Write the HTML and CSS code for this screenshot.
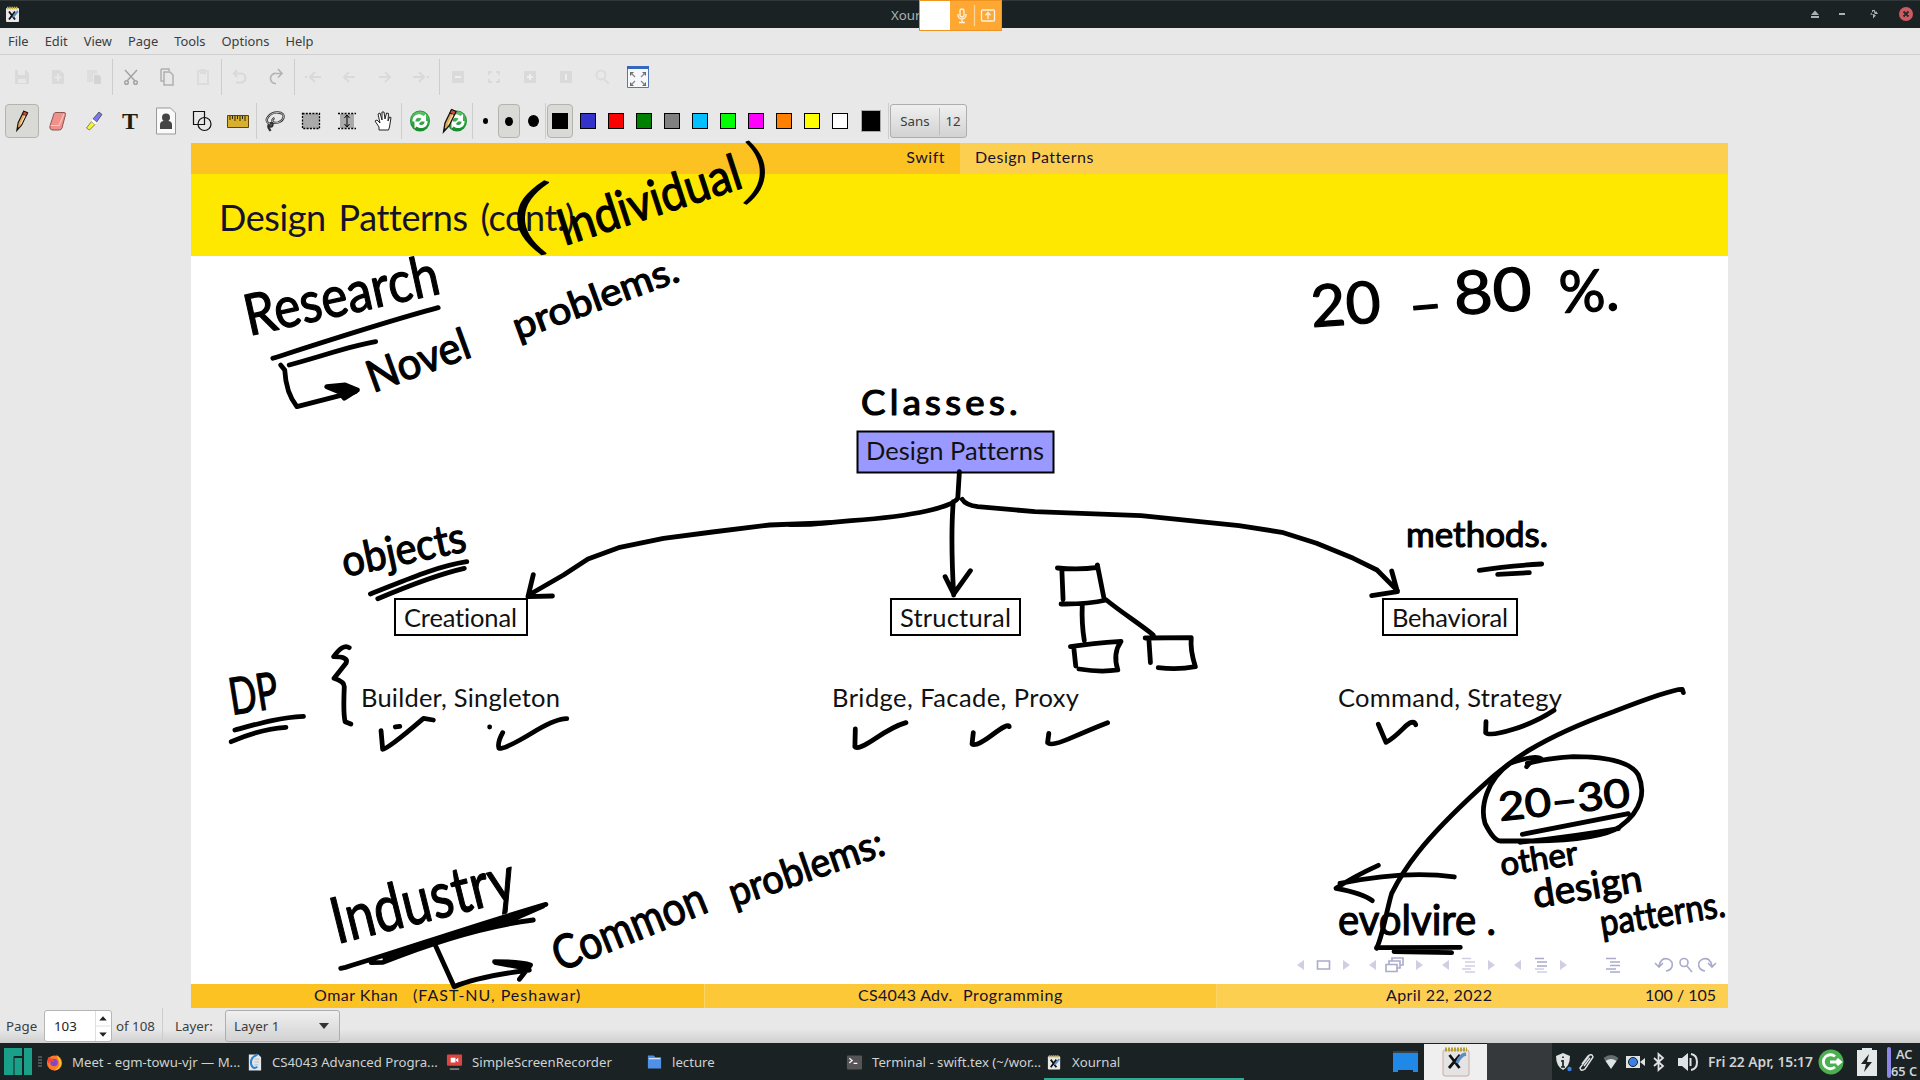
FILE: index.html
```html
<!DOCTYPE html>
<html lang="en">
<head>
<meta charset="utf-8">
<title>Xournal</title>
<link rel="stylesheet" href="styles.css">
</head>
<body>
<svg class="defs" width="0" height="0">
  <defs>
    <g id="xournal">
      <rect x="1" y="2" width="13" height="14" rx="1" fill="#e9e9ea"/>
      <path d="M2 2h11" stroke="#c7b13a" stroke-width="2.4" stroke-dasharray="1.6 .6"/>
      <path d="M4 5.5l6 8M10 5.5l-6 8" stroke="#111" stroke-width="1.9"/>
      <path d="M13 5l-5 6" stroke="#5b8fc9" stroke-width="2"/>
    </g>
    <linearGradient id="green" x2="0" y2="1"><stop stop-color="#5fc46a"/><stop offset="1" stop-color="#128a2b"/></linearGradient>
    <g id="pencil">
      <path d="M9.5 25l1.5-9L17.500 2.500l4.500 2L15 19z" fill="#e0a75e" stroke="#111" stroke-width="1.300"/>
      <path d="M17.500 2.500l4.500 2-1.600 3.600-4.400-2z" fill="#d9463c" stroke="#111"/>
      <path d="M14 17.500l5-10" stroke="#f6dca6" stroke-width="1.400"/>
      <path d="M9.500 25l.8-4 2 1z" fill="#111"/>
    </g>
    <g id="recycle">
      <ellipse cx="12" cy="12" rx="10" ry="10.500" fill="#1d8f33"/>
      <ellipse cx="12" cy="12" rx="9.300" ry="9.800" fill="url(#green)"/>
      <path d="M4.500 12.500C4 6 11 3 15.500 7L18 5v7.500h-7l2.500-2.800C11 7.500 7 9 7.500 12.500zM19.500 12c.5 6.500-6 9-10.800 5.500L6.500 19.500v-7h6.500l-2.200 2.600C13.500 17 17 15.500 16.500 12z" fill="#fff"/>
    </g>
  </defs>
</svg>
<div class="screen">
  <header class="titlebar">
    <svg class="app-icon" viewBox="0 0 16 18"><use href="#xournal"/></svg>
    <span class="window-title">Xour</span>
    <div class="window-buttons">
      <svg viewBox="0 0 140 28" fill="#a9b3b3">
        <path d="M31 14l4-4.500 4 4.500zM31 15h8v2h-8zM59 12h6v2h-6z"/>
        <path d="M90 13.500h5v-5zM92 9h2v4h-2zM93 13.500v4l3-3zM98 13h-4l2-3z"/>
        <circle cx="126" cy="13" r="7" fill="#cd5b61"/>
        <path d="M123.500 10.500l5 5m0-5l-5 5" stroke="#262b2d" stroke-width="1.800"/>
      </svg>
    </div>
    <div class="share-badge">
      <span class="share-preview"></span>
      <svg viewBox="0 0 51 29" fill="none" stroke="#fff3df" stroke-width="1.300">
        <rect x="10" y="8" width="4" height="8" rx="2"/><path d="M8 13v1a4 4 0 0 0 8 0v-1M12 18v3M9 21.500h6"/>
        <path d="M24.500 4v21" stroke="#ffd596"/>
        <rect x="31.500" y="9" width="13" height="11" rx="1"/><path d="M38 18v-6M35.500 14.200L38 11.500l2.500 2.700"/>
      </svg>
    </div>
  </header>

  <nav class="menubar"><span>File</span><span>Edit</span><span>View</span><span>Page</span><span>Tools</span><span>Options</span><span>Help</span></nav>

  <div class="toolbar main-tools">
    <div class="group g108">
      <svg viewBox="0 0 24 24"><path d="M5 5h11l3 3v11H5z" fill="#dadada"/><path d="M8 5v5h7V5M8 14h8v4H8z" fill="#e8e8e8"/></svg>
      <svg viewBox="0 0 24 24"><path d="M6 5h8l4 4v10H6z" fill="#dadada"/><path d="M12 9v7M8.500 12.500h7" stroke="#e8e8e8" stroke-width="2"/></svg>
      <svg viewBox="0 0 24 24"><path d="M5 5h10v4h-4v8H5z" fill="#dedede"/><path d="M12 10h5l2 2v7h-7z" fill="#d4d4d4"/></svg>
    </div><i class="sep"></i>
    <div class="group g108">
      <svg viewBox="0 0 24 24" fill="none" stroke="#a4a4a4" stroke-width="1.500"><path d="M6 5l10 11M18 5L8 16"/><circle cx="7.500" cy="17.500" r="1.800"/><circle cx="16.500" cy="17.500" r="1.800"/></svg>
      <svg viewBox="0 0 24 24" fill="none" stroke="#b0b0b0" stroke-width="1.500"><path d="M6 4h8v2M6 4v12h3M9 7h6l3 3v10H9z"/></svg>
      <svg viewBox="0 0 24 24" fill="none" stroke="#dcdcdc" stroke-width="2"><path d="M7 6h10v13H7zM10 5h4v3h-4z"/></svg>
    </div><i class="sep"></i>
    <div class="group g72">
      <svg viewBox="0 0 24 24" fill="none" stroke="#d9d9d9" stroke-width="2.200"><path d="M9 5L6 8.500 9 12M6 8.500h7a4.500 4.500 0 0 1 0 9h-5"/></svg>
      <svg viewBox="0 0 24 24" fill="none" stroke="#b4b4b4" stroke-width="1.700"><path d="M14 4l4 4.500-4 4M18 8.500h-6a5 5 0 0 0-1 10h1"/></svg>
    </div><i class="sep"></i>
    <div class="group g144">
      <svg viewBox="0 0 24 24" fill="none" stroke="#d9d9d9" stroke-width="2"><path d="M20 12H9M14 7l-5 5 5 5M4 12h2"/></svg>
      <svg viewBox="0 0 24 24" fill="none" stroke="#dadada" stroke-width="2"><path d="M18 12H7M12 7l-5 5 5 5"/></svg>
      <svg viewBox="0 0 24 24" fill="none" stroke="#dadada" stroke-width="2"><path d="M6 12h11M12 7l5 5-5 5"/></svg>
      <svg viewBox="0 0 24 24" fill="none" stroke="#d9d9d9" stroke-width="2"><path d="M4 12h11M10 7l5 5-5 5M18 12h2"/></svg>
    </div><i class="sep"></i>
    <div class="group g216">
      <svg viewBox="0 0 24 24"><path d="M6 6h12v12H6z" fill="#dadada"/><path d="M9 12h6" stroke="#eee" stroke-width="2"/></svg>
      <svg viewBox="0 0 24 24" fill="none" stroke="#dadada" stroke-width="2"><path d="M7 10V7h3m4 0h3v3m0 4v3h-3m-4 0H7v-3"/></svg>
      <svg viewBox="0 0 24 24"><path d="M6 6h12v12H6z" fill="#dadada"/><path d="M9 12h6M12 9v6" stroke="#eee" stroke-width="2"/></svg>
      <svg viewBox="0 0 24 24"><path d="M6 6h12v12H6z" fill="#dadada"/><path d="M12 9v6" stroke="#eee" stroke-width="2"/></svg>
      <svg viewBox="0 0 24 24" fill="none" stroke="#dcdcdc" stroke-width="2"><circle cx="11" cy="10" r="4.500"/><path d="M14 14l5 5"/></svg>
      <svg viewBox="0 0 24 24"><path d="M1.500 1.500h21v21h-21z" fill="#f6f8fc" stroke="#5577b5"/><path d="M1 1h22v3H1z" fill="#3467bd"/><path d="M4 7h4l-4 4zM20 7h-4l4 4zM4 21h4l-4-4zM20 21h-4l4-4z" fill="#66696f"/><path d="M5 8l4 4M19 8l-4 4M5 20l4-4M19 20l-4-4" stroke="#888" stroke-width="1.300"/></svg>
    </div>
  </div>

  <div class="toolbar draw-tools">
    <div class="group g252">
      <span class="tool active w34"><svg viewBox="0 0 28 28"><use href="#pencil" x="-1.500"/></svg></span>
      <svg viewBox="0 0 24 24"><path d="M4 17L8 4.500q.5-1 2-1h8q2 0 1.500 2L16 19q-.5 2-3 2H6q-3-1-2-4z" fill="#f0918c" stroke="#8c5552"/><path d="M4.500 16.500H13L18 5" fill="none" stroke="#f9c5c1" stroke-width="1.200"/></svg>
      <svg viewBox="0 0 24 24"><path d="M11 10l6-7 3 2.500-5.500 7.500z" fill="#7b78ea" stroke="#333" stroke-width=".7"/><path d="M4.500 19l5-6.500 3.500 3-5.500 5.500z" fill="#f7f52d" stroke="#555" stroke-width=".7"/><path d="M10 11l4 3.500" stroke="#fff" stroke-width="2.500"/></svg>
      <span class="t-icon">T</span>
      <svg class="big" viewBox="0 0 28 28"><path d="M4.500 1h14l5 5v21h-19z" fill="#fafafa" stroke="#999"/><circle cx="14" cy="10.500" r="4" fill="#444"/><path d="M8 22v-4q0-4 4-4h4q4 0 4 4v4z" fill="#444"/></svg>
      <svg viewBox="0 0 24 24" fill="none" stroke="#111" stroke-width="1.200"><path d="M3.500 2.500h11v13h-11z"/><circle cx="14.500" cy="15" r="6.500"/></svg>
      <svg viewBox="0 0 24 24"><path d="M1.500 6.500h21v12h-21z" fill="#d9b02e" stroke="#594608"/><path d="M4 7v4M6.500 7v3M9 7v5M11.500 7v3M14 7v5M16.500 7v3M19 7v5" stroke="#332706"/></svg>
    </div><i class="sep"></i>
    <div class="group g144">
      <svg viewBox="0 0 24 24" fill="none"><path d="M7 15C-1 12 7 3 15 3.500c9 .5 6 8 0 10-5 1.500-8-2-3.500-4.500M7 14.500c-2 4 3 4 2.500 1s-5-1-4 3l2 3.500" stroke="#333" stroke-width="2.300"/><path d="M7 15C-1 12 7 3 15 3.500c9 .5 6 8 0 10-5 1.500-8-2-3.500-4.500" stroke="#ccc" stroke-width=".9"/></svg>
      <svg viewBox="0 0 24 24"><path d="M3.500 4.500h17v15h-17z" fill="#aaa" stroke="#000" stroke-width="1.300" stroke-dasharray="2 1.300"/></svg>
      <svg viewBox="0 0 24 24"><path d="M5 5h14v14H5z" fill="#aaa"/><path d="M3 4.500h18M3 19.500h18" stroke="#000" stroke-width="1.300" stroke-dasharray="2 1.300"/><path d="M12 6v12M9.500 9L12 6l2.500 3M9.500 15l2.500 3 2.500-3" fill="none" stroke="#000"/></svg>
      <svg viewBox="0 0 24 24"><path d="M8 21v-3l-4-6 2-1 3 3-2-9 2-1 2 7V3h2l1 7 1.500-6 2 .5-.5 7.500 1.500-4 1.500.5-1.500 9.500-1 3z" fill="#fff" stroke="#222"/></svg>
    </div><i class="sep"></i>
    <div class="group g70">
      <svg viewBox="0 0 24 24"><use href="#recycle"/></svg>
      <svg class="big" viewBox="0 0 28 28"><use href="#recycle" x="4" y="2"/><use href="#pencil" x="-7"/></svg>
    </div><i class="sep"></i>
    <div class="group g72">
      <span class="tool w22"><b class="dot d5"></b></span><span class="tool w22 active"><b class="dot d9"></b></span><span class="tool w22"><b class="dot d12"></b></span>
    </div><i class="sep"></i>
    <div class="group colors">
      <span class="tool w26 active"><b class="sw black"></b></span><span class="tool w26"><b class="sw blue"></b></span><span class="tool w26"><b class="sw red"></b></span><span class="tool w26"><b class="sw green"></b></span><span class="tool w26"><b class="sw gray"></b></span><span class="tool w26"><b class="sw cyan"></b></span><span class="tool w26"><b class="sw lime"></b></span><span class="tool w26"><b class="sw magenta"></b></span><span class="tool w26"><b class="sw orange"></b></span><span class="tool w26"><b class="sw yellow"></b></span><span class="tool w26"><b class="sw white"></b></span>
      <b class="current"></b>
    </div><i class="sep"></i>
    <div class="font-button"><span>Sans</span><span>12</span></div>
  </div>

  <main class="canvas">
    <section class="slide">
      <div class="crumbs"><div class="crumb-left">Swift</div><div class="crumb-right">Design Patterns</div></div>
      <h1 class="slide-title">Design Patterns (cont.)</h1>
      <div class="slide-body"></div>
      <div class="slide-foot"><div><span class="author">Omar Khan</span><span class="inst">(FAST-NU, Peshawar)</span></div><div><span class="course">CS4043 Adv.</span><span class="course2">Programming</span></div><div><span class="date">April 22, 2022</span><span class="pages">100 / 105</span></div></div>

      <svg class="ink" viewBox="191 143 1537 865">
        <g class="node">
          <rect x="857.500" y="431.500" width="196" height="41"/>
          <rect x="395" y="599" width="132" height="36"/><rect x="891" y="599" width="129" height="36"/><rect x="1383" y="599" width="134" height="36"/>
        </g>
        <g class="latex">
          <text x="866" y="459.500" textLength="178">Design Patterns</text>
          <text x="404" y="626.500" textLength="113">Creational</text>
          <text x="900" y="626.500" textLength="111">Structural</text>
          <text x="1392" y="626.500" textLength="116">Behavioral</text>
          <text x="361" y="706.500" textLength="199">Builder, Singleton</text>
          <text x="832" y="706.500" textLength="247">Bridge, Facade, Proxy</text>
          <text x="1338" y="706.500" textLength="224">Command, Strategy</text>
        </g>

        <g class="beamer-nav">
          <path class="tri" d="M1297 965l7-5v10zM1350 965l-7-5v10zM1369 965l7-5v10zM1423 965l-7-5v10zM1442 965l7-5v10zM1495 965l-7-5v10zM1514 965l7-5v10zM1567 965l-7-5v10z"/>
          <path d="M1317.500 961h12v8h-12zM1386 964.500h11v7h-11zM1389 964v-3h11v7h-3M1392 961v-3h11v7h-3"/>
          <path class="pale" d="M1462 958.500h9M1465 962h10M1465 966h10M1462 969h9M1465 972h10"/>
          <path d="M1535 958.500h9M1537 962h10M1537 966h10"/><path class="pale" d="M1535 969h9M1537 972h10"/>
          <path d="M1606 958.500h10M1610 962h10M1610 965.500h10M1606 969h10M1610 972h10"/>
          <path d="M1655 963l4 4 4-4M1659 966q2-9 9-7c7 3 5 11-2 12M1716 963l-4 4-4-4M1712 966q-2-9-9-7c-7 3-5 11 2 12"/>
          <circle cx="1684" cy="962.500" r="4"/><path d="M1687 966l5 6" stroke-width="2.500"/>
        </g>

        <g class="hand">
          <text class="paren" transform="translate(506 243) rotate(2)" font-size="84" textLength="48" lengthAdjust="spacingAndGlyphs">(</text>
          <text transform="translate(564 246) rotate(-18)" font-size="50" textLength="190" lengthAdjust="spacingAndGlyphs">Individual</text>
          <text class="paren" transform="translate(739 195) rotate(2)" font-size="72" textLength="32" lengthAdjust="spacingAndGlyphs">)</text>
          <text transform="translate(249 336) rotate(-12.500)" font-size="57" textLength="198" lengthAdjust="spacingAndGlyphs">Research</text>
          <text transform="translate(373 393) rotate(-20)" font-size="44" textLength="107" lengthAdjust="spacingAndGlyphs">Novel</text>
          <text transform="translate(518 340) rotate(-20)" font-size="38" textLength="174" lengthAdjust="spacingAndGlyphs">problems.</text>
          <text class="wide" transform="translate(861 415)" font-size="34" textLength="161" lengthAdjust="spacingAndGlyphs">Classes.</text>
          <text transform="translate(345 577) rotate(-12)" font-size="43" textLength="126" lengthAdjust="spacingAndGlyphs">objects</text>
          <text transform="translate(232 715) rotate(-9)" font-size="51" textLength="49" lengthAdjust="spacingAndGlyphs">DP</text>
          <text transform="translate(1406 547)" font-size="35" textLength="142" lengthAdjust="spacingAndGlyphs">methods.</text>
          <text transform="translate(1312 327) rotate(-4)" font-size="58" textLength="70" lengthAdjust="spacingAndGlyphs">20</text>
          <text transform="translate(1410 325) rotate(-5)" font-size="56" textLength="34" lengthAdjust="spacingAndGlyphs">–</text>
          <text transform="translate(1455 315) rotate(-4)" font-size="60" textLength="78" lengthAdjust="spacingAndGlyphs">80</text>
          <text transform="translate(1560 313) rotate(-3)" font-size="58" textLength="60" lengthAdjust="spacingAndGlyphs">%.</text>
          <text transform="translate(1500 821) rotate(-6.500)" font-size="39" textLength="132" lengthAdjust="spacingAndGlyphs">20–30</text>
          <text transform="translate(1502 876) rotate(-9)" font-size="33" textLength="78" lengthAdjust="spacingAndGlyphs">other</text>
          <text transform="translate(1535 908) rotate(-9)" font-size="38" textLength="110" lengthAdjust="spacingAndGlyphs">design</text>
          <text transform="translate(1602 936) rotate(-9)" font-size="37" textLength="126" lengthAdjust="spacingAndGlyphs">patterns.</text>
          <text transform="translate(1338 935)" font-size="43" textLength="158" lengthAdjust="spacingAndGlyphs">evolvire .</text>
          <text transform="translate(337 944) rotate(-14)" font-size="64" textLength="188" lengthAdjust="spacingAndGlyphs">Industry</text>
          <text transform="translate(560 972) rotate(-22)" font-size="47" textLength="162" lengthAdjust="spacingAndGlyphs">Common</text>
          <text transform="translate(734 907) rotate(-19)" font-size="40" textLength="162" lengthAdjust="spacingAndGlyphs">problems:</text>
        </g>

        <g class="strokes">
          <g transform="translate(190 140) scale(.4082 .33333)">
            <path d="M203 655C330 605 480 545 608 503M243 675C320 650 400 615 455 605M222 675l10 15Q235 760 262 800L405 755"/>
            <path class="solid" d="M335 740L380 735 410 750 378 775 365 755z"/>
          </g>
          <g transform="translate(190 480) scale(.4082 .33333)">
            <path d="M442 342C520 305 600 260 678 245M460 356C530 320 600 285 672 265M390 503Q375 490 352 530 390 530 382 550L353 595Q378 605 378 620 375 700 380 725L394 732M110 750C170 730 220 712 278 709M101 785Q170 748 235 742"/>
            <path d="M468 752L472 808Q480 812 572 715L596 720M503 741L514 739M734 741h.1M766 758Q752 790 757 805 770 810 850 750 900 715 923 716"/>
            <path d="M1568 128L1420 135 1280 156 1160 175 1050 203 975 237 915 285 830 345M841 284L828 350 888 348"/>
          </g>
          <g transform="translate(790 370) scale(.4082 .33333)">
            <path d="M415 305L411 385Q400 405 335 423T150 452L50 463 0 464M400 395Q393 500 401 675M380 620L401 672 442 602"/>
            <path d="M422 388Q430 405 460 410L600 425 860 437 1100 467 1205 487 1290 520 1380 565 1438 600 1488 662M1474 603L1488 665 1425 677"/>
            <path d="M655 594Q710 600 754 592L753 585 770 690M666 600L669 688M664 702Q730 703 775 690C810 725 860 765 890 795M716 705Q714 760 721 812M687 830Q740 820 811 814 790 850 803 900 760 908 708 897M695 830L700 888M870 804L983 803Q980 840 993 890 950 900 902 893M879 805L883 878"/>
            <path d="M160 1077L159 1130Q165 1142 210 1105T284 1058M449 1088L446 1122Q455 1132 495 1095T537 1070M634 1090L631 1118Q640 1130 690 1103T778 1058"/>
          </g>
          <g transform="translate(1260 240) scale(.33333)">
            <path d="M658 991Q740 978 845 972M713 1003L808 998M355 1453L378 1507Q400 1495 430 1465T467 1454M678 1445L677 1478Q690 1490 760 1468T882 1411"/>
          </g>
          <g transform="translate(1280 680) scale(.33333)">
            <path d="M1210 38L1207 28Q1180 25 1000 95C780 175 690 240 600 325 420 490 370 570 335 640 320 690 310 760 290 805"/>
            <path d="M740 260Q750 242 785 238 770 222 690 250C620 300 600 380 615 430Q640 480 660 483L760 483Q960 480 1020 440C1090 390 1095 330 1075 285 1050 240 960 230 880 230Q800 235 742 250M727 463L1045 401M720 487Q880 470 1015 446"/>
            <path d="M523 591Q380 570 180 610M295 556Q220 590 168 625 250 640 277 662M290 803L541 802M342 815L515 818"/>
          </g>
          <g transform="translate(300 810) scale(.3954 .33333)">
            <path d="M103 475L115 472C260 420 430 350 622 283M180 458L210 457C330 400 460 350 590 330M215 446L430 357 540 327 615 288M342 405L390 530Q450 500 580 480M492 455Q560 455 583 465L555 508M495 458L575 475"/>
          </g>
        </g>
      </svg>
    </section>
  </main>

  <footer class="statusbar">
    <span class="page-label">Page</span>
    <div class="spin"><span>103</span><svg viewBox="0 0 16 32"><path d="M0 0v32M0 16h16" stroke="#ddd"/><path d="M4 10l4-4.500 4 4.500zM4 23l4 4.500 4-4.500z" fill="#222"/></svg></div>
    <span class="of">of 108</span><i class="sep"></i>
    <span class="layer">Layer:</span>
    <div class="combo"><span>Layer 1</span><svg viewBox="0 0 10 6"><path d="M0 0h10L5 6z" fill="#333"/></svg></div>
  </footer>

  <div class="taskbar">
    <svg class="start" viewBox="0 0 44 37"><path d="M4 5h18v8h-8v19H4zM14 15h8v17h-8zM24 5h8v27h-8z" fill="#1aa088"/><path d="M14 13.500v18.500" stroke="#1b2224"/><path d="M38 14h4M38 17h4M38 20h4M38 23h4" stroke="#7c8283"/></svg>
    <div class="tasks">
      <div class="task"><svg viewBox="0 0 18 18"><circle cx="9" cy="10" r="8" fill="#ff7a22"/><path d="M11 1q6 5 5 11-2 6-8 6 7-3 6-9z" fill="#ffc72c"/><circle cx="8.500" cy="9.500" r="4" fill="#8745c8"/><path d="M2 4q6 1 7 5-5-2-7 2z" fill="#f8472c"/></svg><span>Meet - egm-towu-vjr — M...</span></div>
      <div class="task"><svg viewBox="0 0 18 18"><path d="M3 1h10l3 3v14H3z" fill="#e4e8ea"/><path d="M12 1q-9 4-6 12 2 4 6 1" fill="none" stroke="#2d83cf" stroke-width="2.200"/><path d="M9 6h5M9 9h5M9 12h4" stroke="#bbb"/></svg><span>CS4043 Advanced Progra...</span></div>
      <div class="task"><svg viewBox="0 0 18 18"><rect x="1" y="1" width="16" height="12" rx="1" fill="#dd4541"/><path d="M5 4.500h5v5H5zM10 7l3-2.500v5z" fill="#fff"/><path d="M4 15.500h10v2H4z" fill="#777"/></svg><span>SimpleScreenRecorder</span></div>
      <div class="task"><svg viewBox="0 0 18 18"><path d="M2 2h6l2 2h6v12H2z" fill="#4f91e6"/><path d="M3 5.500h12" stroke="#e6eefa" stroke-width="1.200"/></svg><span>lecture</span></div>
      <div class="task"><svg viewBox="0 0 18 18"><rect x="1" y="2" width="16" height="15" rx="1" fill="#555"/><path d="M3.500 5l3 2.500-3 2.500M8 10.500h4" fill="none" stroke="#fff" stroke-width="1.300"/></svg><span>Terminal - swift.tex (~/wor...</span></div>
      <div class="task current-task"><svg viewBox="0 0 18 18"><use href="#xournal" x="1" y="1"/></svg><span>Xournal</span></div>
    </div>
    <div class="tray">
      <svg class="pager" viewBox="0 0 25 24"><path d="M0 3h25v19h-5v-2H5v2H0z" fill="#2088e6"/><path d="M0 1h25v2H0z" fill="#34414b"/></svg>
      <div class="workspace"><svg viewBox="0 0 30 32"><rect x="2" y="4" width="26" height="26" rx="2" fill="#e4e4e4" stroke="#c8a9a4"/><path d="M4 3.500h22" stroke="#b8a02f" stroke-width="4" stroke-dasharray="2 1"/><path d="M8.500 9l10 13M19 9L8 22" stroke="#111" stroke-width="2.800"/><path d="M25 8q-6 1-9 9" stroke="#5c8cc4" stroke-width="3.500" fill="none"/></svg></div>
      <div class="workspace2"></div>
      <svg class="icons" viewBox="1552 1043 156 37" fill="none" stroke="#dfe3e3">
        <path d="M1563 1053l7 3q0 10-7 14-7-4-7-14z" fill="#dfe3e3" stroke="none"/><path d="M1563 1060v7M1561 1067h4M1561 1061h2M1563 1056.500v1.500" stroke="#1b2224" stroke-width="1.700"/><circle cx="1569.500" cy="1069" r="2.200" fill="#3d7fe8" stroke="none"/>
        <path d="M1582 1064l6-8q4-3 5 1l-8 12q-4 3-5-1l9-12M1584 1066l6-8" stroke-width="1.400"/>
        <path d="M1603.500 1058q7.500-6 15 0l-2 3h-11z" fill="#656c6e" stroke="none"/><path d="M1605.500 1061q5.500-4 11 0l-5.500 8z" fill="#dfe3e3" stroke="none"/>
        <path d="M1626 1056h14v12h-14zM1640 1062l5-4v8z" fill="#dfe3e3" stroke="none"/><circle cx="1633" cy="1062" r="4.500" fill="#3d7fe8" stroke="#1b2224" stroke-width="1"/>
        <path d="M1654 1058l9 8-4.500 4v-16l4.500 4-9 8" stroke-width="1.800"/>
        <path d="M1678 1058h4l6-5v18l-6-5h-4z" fill="#dfe3e3" stroke="none"/><path d="M1690.500 1058v8M1691 1054q6 1 6 8t-6 8" stroke-width="2"/>
      </svg>
      <span class="clock">Fri 22 Apr, 15:17</span>
      <svg class="power" viewBox="1817 1043 74 37"><circle cx="1831" cy="1062" r="12.500" fill="#4cb050"/><path d="M1835 1056.500a7 7 0 1 0 0 10.500M1830 1062h10M1837 1059l3.500 3-3.500 3" fill="none" stroke="#fff" stroke-width="2.800"/><path d="M1857 1050h5v-2h10v2h5v26h-20z" fill="#e4e8e8"/><path d="M1869 1054l-8 10h5l-2 8 8-10h-5z" fill="#1b2224"/><rect x="1887" y="1047" width="4" height="31" rx="2" fill="#8d86e8"/></svg>
      <div class="sensor"><span>AC</span><span>65 C</span></div>
    </div>
  </div>
</div>
</body>
</html>
```
FILE: styles.css
```css
* { box-sizing: border-box; }
body { margin: 0; font-family: "Noto Sans", sans-serif; font-size: 13.3px; color: #3b3e3f; }
svg { display: block; flex: none; }
.defs { position: absolute; }
.screen { width: 1920px; height: 1080px; overflow: hidden; background: #e8e8e8; display: flex; flex-direction: column; }

.titlebar { position: relative; height: 28px; flex: none; background: #1b2224; border-top: 1px solid #30383a; display: flex; align-items: center; }
.app-icon { width: 16px; height: 18px; margin-left: 5px; }
.window-title { margin-left: 870px; width: 40px; color: #a9b1b2; line-height: 26px; }
.window-buttons { margin-left: auto; width: 140px; }
.window-buttons svg { width: 140px; height: 28px; }
.share-badge { position: absolute; left: 919px; top: -1px; width: 83px; height: 31px; background: #ffa733; border: 1px solid #ef9420; display: flex; z-index: 2; }
.share-preview { width: 30px; background: #fff; }
.share-badge svg { width: 51px; height: 29px; }

.menubar { height: 27px; flex: none; border-bottom: 1px solid #cfcfcf; display: flex; gap: 16px; padding-left: 8px; align-items: center; line-height: 20px; font-size: 12.9px; }
.toolbar { display: flex; align-items: center; flex: none; height: 36px; padding-left: 4px; }
.main-tools { margin-top: 4px; }
.draw-tools { margin-top: 8px; }
.group { display: grid; grid-auto-flow: column; grid-auto-columns: 1fr; align-items: center; justify-items: center; height: 100%; flex: none; }
.group svg { width: 24px; height: 24px; }
.group .big { width: 28px; height: 28px; }
.g70 { width: 70px; } .g72 { width: 72px; } .g108 { width: 108px; } .g144 { width: 144px; } .g216 { width: 216px; } .g252 { width: 252px; }
.sep { width: 1px; align-self: stretch; background: #cdcdcd; flex: none; }
.tool { height: 34px; display: flex; align-items: center; justify-content: center; border: 1px solid transparent; border-radius: 4px; flex: none; }
.active { background: #d9dad6; border-color: #b3b4ae; }
.w34 { width: 34px; } .w22 { width: 22px; } .w26 { width: 26px; }
.t-icon { font: bold 24px/34px "Liberation Serif", serif; color: #1d1d10; }
.dot { border-radius: 50%; background: #000; }
.d5 { width: 5px; height: 6px; } .d9 { width: 8px; height: 9px; } .d12 { width: 11px; height: 12px; }
.sw { width: 16px; height: 16px; border: 1px solid #000; }
.colors { width: 342px; display: flex; gap: 2px; padding-left: 1px; }
.black { background: #000; } .blue { background: #3333cc; } .red { background: #f00; } .green { background: #008000; } .gray { background: #808080; }
.cyan { background: #00c0ff; } .lime { background: #0f0; } .magenta { background: #f0f; } .orange { background: #ff8000; } .yellow { background: #ff0; } .white { background: #fff; }
.current { width: 20px; height: 22px; margin-left: 6px; background: #000; border: 1px solid #aaa; }
.font-button, .combo { background: linear-gradient(#f0f0f0, #d2d2d2); border: 1px solid #aeaeae; border-radius: 3px; display: flex; align-items: center; }
.font-button { width: 77px; height: 34px; margin-left: 1px; }
.font-button span { width: 48px; text-align: center; line-height: 27px; }
.font-button span + span { width: 27px; border-left: 1px solid #bdbdbd; }

.canvas { flex: none; width: 1537px; height: 865px; margin: 4px 0 0 191px; }
.slide { position: relative; height: 865px; background: #fff; display: flex; flex-direction: column; font-family: Lato, sans-serif; font-variant-ligatures: none; color: #16122e; }
.crumbs { display: flex; height: 31px; flex: none; font-size: 16px; line-height: 28px; }
.crumb-left { width: 769px; background: #fcc222; text-align: right; padding-right: 15px; letter-spacing: .5px; }
.crumb-right { flex: 1; background: #fdcf50; padding-left: 15px; letter-spacing: .5px; }
.slide-title { height: 82px; flex: none; margin: 0; padding-left: 28px; background: #ffe800; font-size: 36px; font-weight: 400; line-height: 86px; letter-spacing: -.4px; word-spacing: 4px; white-space: nowrap; }
.slide-body { flex: 1; }
.slide-foot { height: 24px; flex: none; display: flex; font-size: 16px; line-height: 21px; white-space: nowrap; }
.slide-foot > div { width: 513px; display: flex; background: #fcc222; }
.slide-foot > div + div { width: 512px; background: #fcc838; border-left: 1px solid #fdd566; }
.slide-foot > div + div + div { background: #fdcf50; }
.author { margin-left: 123px; width: 99px; letter-spacing: .5px; }
.inst { letter-spacing: 1px; }
.course { margin-left: 153px; width: 105px; letter-spacing: .3px; }
.course2 { letter-spacing: .6px; }
.date { margin-left: 169px; width: 259px; letter-spacing: .4px; }
.pages { letter-spacing: 0; }
.ink { position: absolute; left: 0; top: 0; width: 1537px; height: 865px; overflow: visible; }
.node rect { fill: none; stroke: #000; stroke-width: 2; }
.node rect:first-child { fill: #9999ff; }
.latex { font-size: 25.5px; fill: #111; }
.beamer-nav path, .beamer-nav circle { fill: none; stroke: #aaaacb; stroke-width: 1.6; }
.beamer-nav .tri { fill: #cfcfe4; stroke: none; }
.beamer-nav .pale { stroke: #cfcfe2; }
.hand text { font-family: Lato, sans-serif; font-weight: 400; fill: #000; stroke: #000; stroke-width: 1.2; stroke-linejoin: round; }
.hand .paren { font-weight: 300; stroke-width: 0; }
.hand .wide { letter-spacing: 4px; }
.strokes path { fill: none; stroke: #000; stroke-width: 4.8; stroke-linecap: round; stroke-linejoin: round; vector-effect: non-scaling-stroke; }
.strokes .solid { fill: #000; }

.statusbar { height: 35px; flex: none; display: flex; align-items: center; background: linear-gradient(#e8e8e8 60%, #cfcfcf); line-height: 20px; }
.page-label { margin-left: 6px; width: 38px; }
.spin { width: 68px; height: 32px; border: 1px solid #b5b5b5; border-radius: 3px; background: #fff; display: flex; align-items: center; justify-content: space-between; padding-left: 9px; color: #222; }
.spin svg { width: 16px; height: 30px; }
.of { margin-left: 4px; width: 46px; }
.layer { margin-left: 12px; width: 50px; }
.combo { width: 115px; height: 32px; padding: 0 10px 0 8px; justify-content: space-between; }
.combo svg { width: 10px; height: 6px; }

.taskbar { height: 37px; flex: none; background: #1b2224; display: flex; color: #cdd2d2; }
.start { width: 44px; height: 37px; }
.tasks { display: grid; grid-template-columns: repeat(6, 200px); }
.task { display: flex; align-items: center; gap: 9px; padding-left: 2px; white-space: nowrap; font-size: 13.2px; }
.task svg { width: 17px; height: 18px; }
.current-task { box-shadow: inset 0 -2px #33ab92; }
.tray { display: flex; flex: 1; align-items: center; padding-left: 149px; }
.pager { width: 25px; height: 24px; margin-right: 6px; }
.workspace { width: 63px; height: 36px; background: #efefef; display: flex; justify-content: center; align-items: center; }
.workspace svg { width: 30px; height: 32px; }
.workspace2 { width: 65px; height: 37px; background: #36393c; }
.icons { width: 156px; height: 37px; }
.clock { width: 109px; font-size: 13.8px; font-weight: 600; white-space: nowrap; }
.power { width: 74px; height: 37px; }
.sensor { width: 29px; height: 37px; display: flex; flex-direction: column; font-size: 12.8px; font-weight: 600; line-height: 17px; padding-top: 3px; white-space: nowrap; }
.sensor span:first-child { padding-left: 5px; }
```
